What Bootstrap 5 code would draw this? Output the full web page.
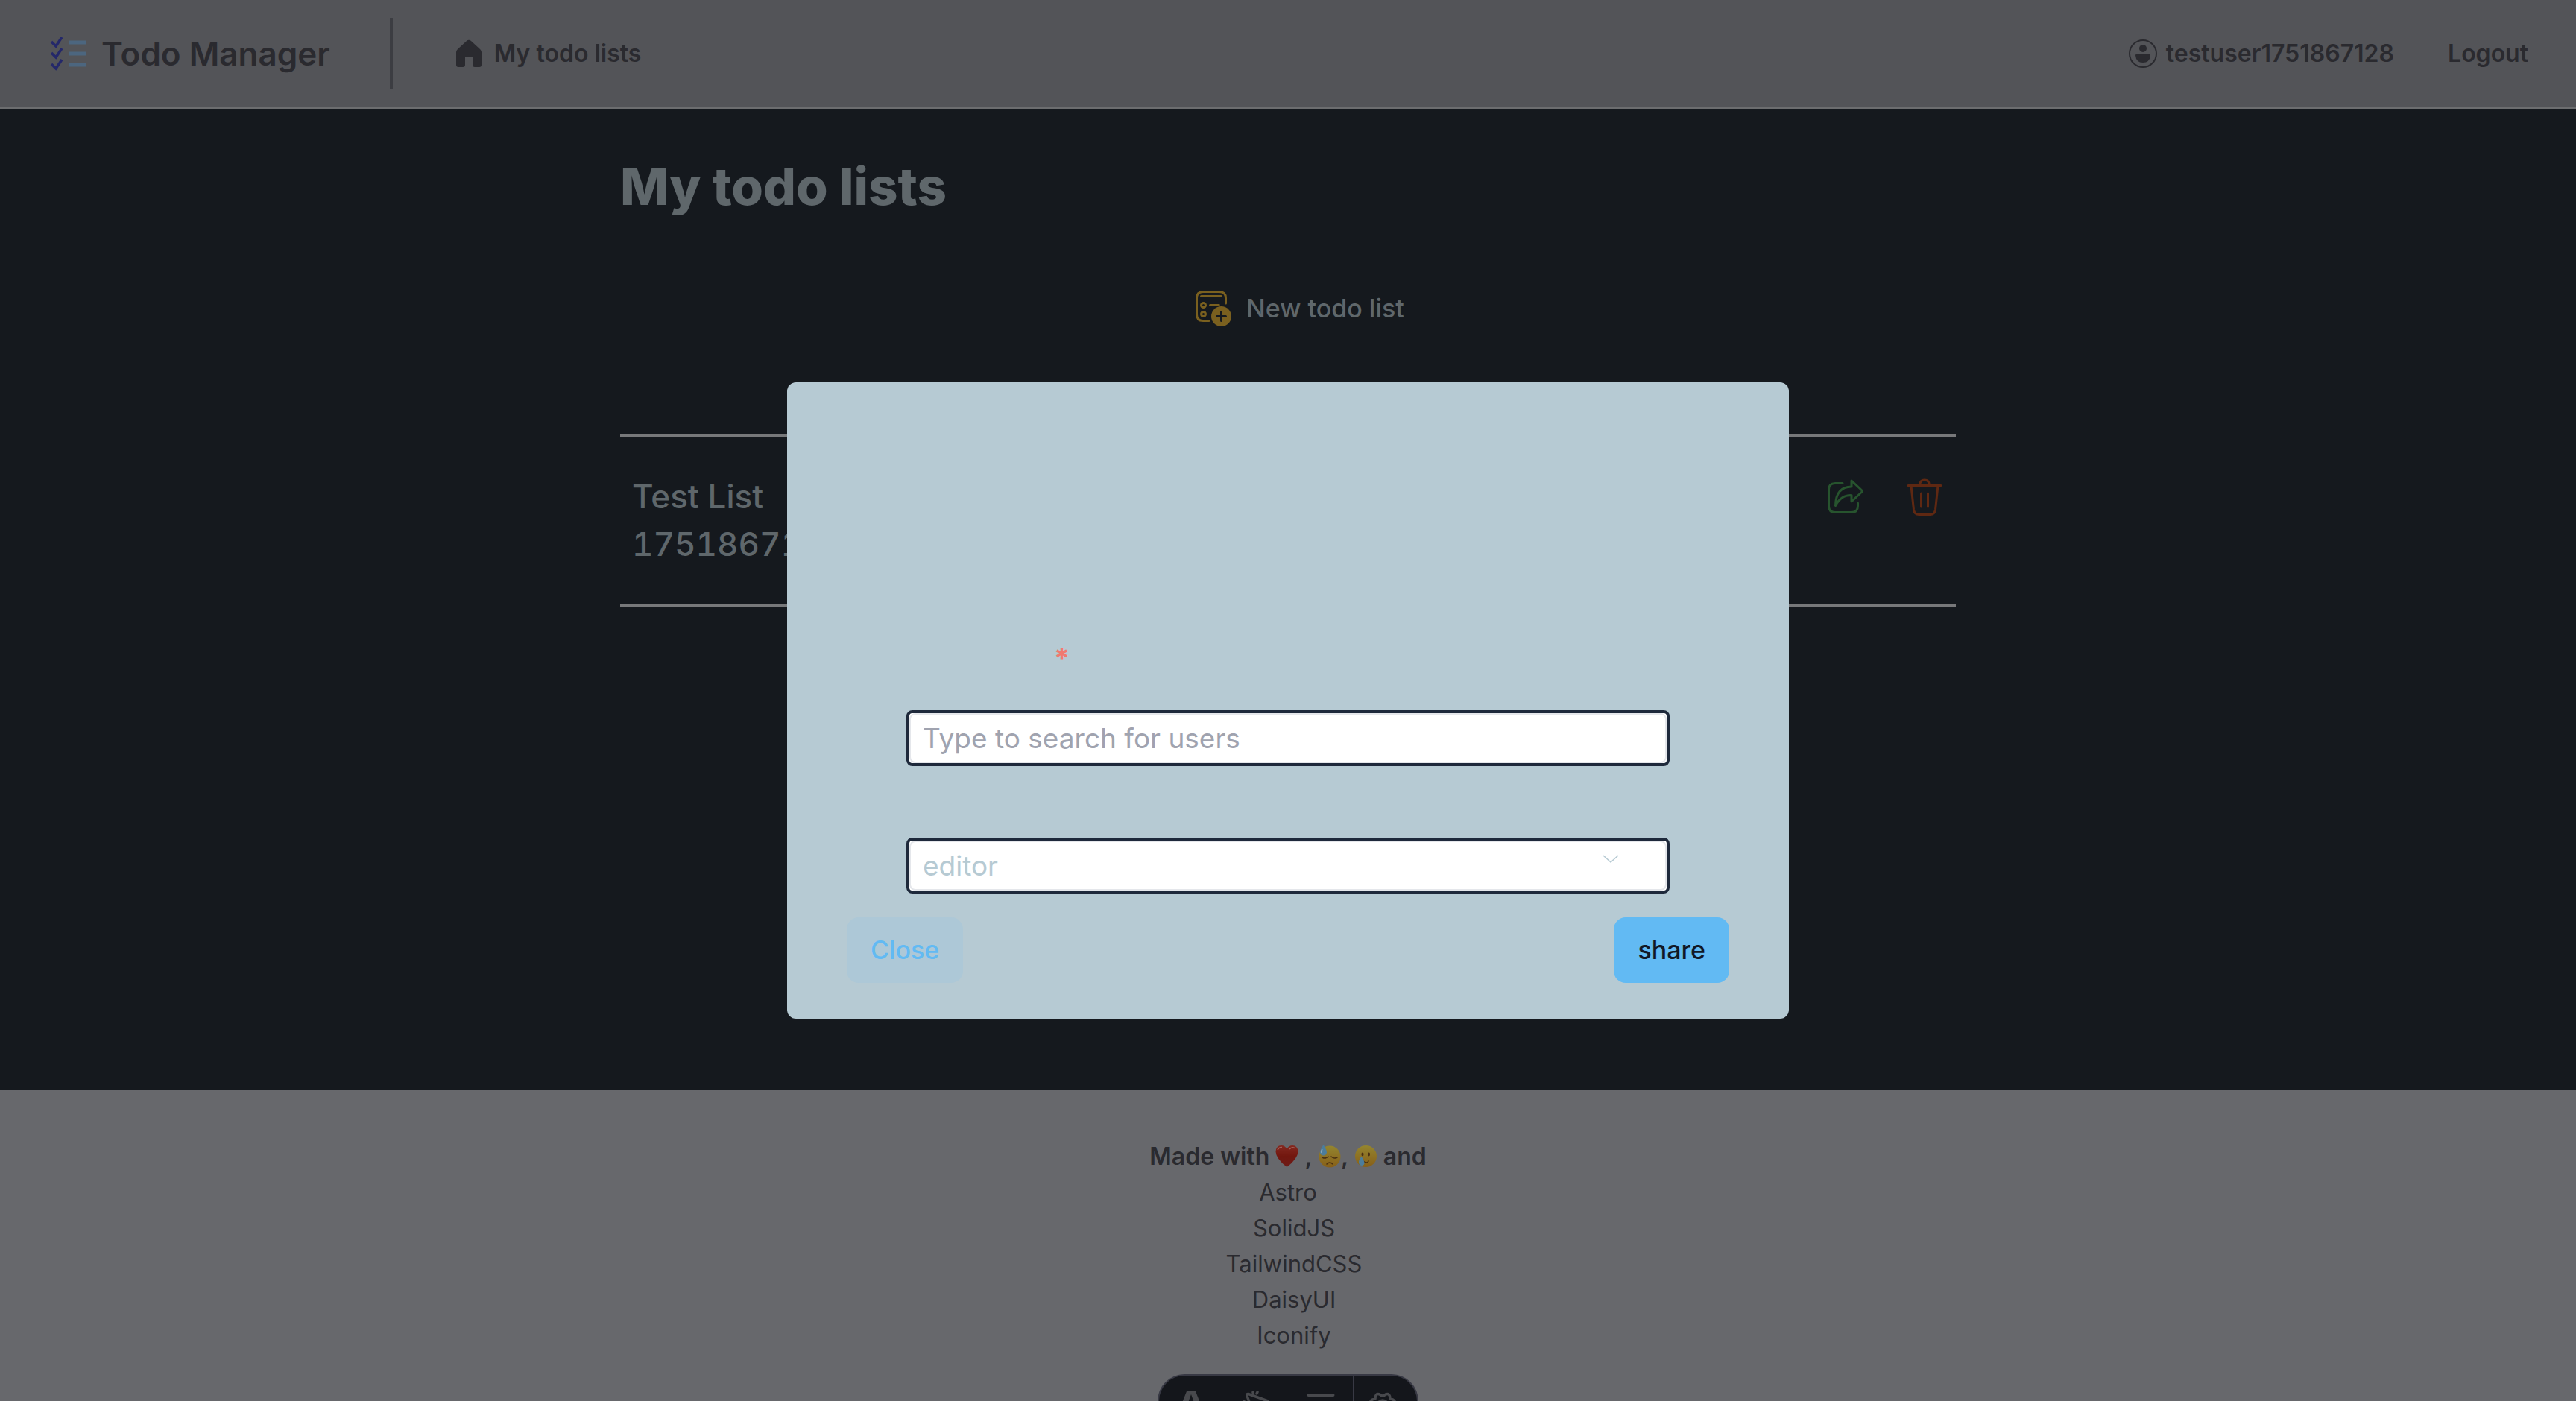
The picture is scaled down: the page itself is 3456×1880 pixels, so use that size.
<!DOCTYPE html>
<html lang="en">
<head>
<meta charset="utf-8">
<meta name="viewport" content="width=device-width, initial-scale=1">
<title>Todo Manager</title>
<link href="https://cdn.jsdelivr.net/npm/bootstrap@5.3.0/dist/css/bootstrap.min.css" rel="stylesheet">
<style>
  body { font-family: Inter, "Liberation Sans", sans-serif; font-size: 32px; line-height: 48px; background: #15191e; color: #5f676b; }
  a { color: inherit; text-decoration: none; }
  svg { display: block; flex: none; }
  .topbar { background: #535458; color: #2a2a2f; border-bottom: 2px solid #6c6d6f; padding: 24px 64px; font-weight: 600; }
  .brand { font-size: 44px; line-height: 64px; gap: 20px; }
  .brand-rule { width: 4px; height: 96px; background: #3c3d42; margin: 0 84px 0 80px; }
  .account { gap: 12px; margin-right: 72px; }
  .page-col { width: 100%; max-width: 1792px; padding: 64px 0; }
  .page-title { font-size: 69px; line-height: 80px; font-weight: 800; margin: 0 0 100px; }
  .new-list { font-size: 34px; font-weight: 500; gap: 20px; color: inherit; margin-left: 32px; }
  .list-row { border-top: 4px solid #77787a; border-bottom: 4px solid #77787a; padding: 48px 16px; margin-top: 144px; }
  .list-name { font-size: 44px; line-height: 64px; font-weight: 500; max-width: 400px; margin: 0; font-variant-numeric: tabular-nums; }
  .list-tools { gap: 56px; padding-top: 8px; }
  .icon-btn { border: 0; background: none; padding: 0; }
  .site-foot { background: #67686c; color: #2a2a2f; padding: 66px 0 64px; }
  .made-with { font-weight: 600; font-size: 32px; }
  .made-with svg { display: inline-block; vertical-align: -4px; }
  .stack-list { font-size: 31px; }
  .toolbar-dev { width: 350px; height: 36px; background: #14161b; border: 2px solid #383944; border-bottom: 0; border-radius: 40px 40px 0 0; z-index: 1030; overflow: hidden; }
  .tool { flex: 1 1 0; display: flex; justify-content: center; padding-top: 20px; }
  .tool-last { flex: 0 0 86px; border-left: 2px solid #383944; padding-right: 8px; }
  .share-box { max-width: 1344px; width: 100%; min-height: 100%; margin: 0 auto; }
  .share-body { background: #b6cad3; border: 0; border-radius: 12px; padding: 348px 80px 48px; }
  .share-fields { padding: 0 80px; }
  .req { color: #f07a70; font-size: 38px; line-height: 44px; padding-left: 198px; margin-bottom: 48px; font-weight: 700; }
  .ring { border: 4px solid #1e293b; border-radius: 8px; background: #fff; }
  .ring + .ring { margin-top: 96px; }
  .ring .form-control, .ring .form-select { border: 2px solid #e5e7eb; border-radius: 8px; padding: 0 16px; height: 67px; font-size: 37px; line-height: 56px; color: #b6cad3; background-color: #fff; box-shadow: none; }
  .ring .form-control::placeholder { color: #a0a3af; opacity: 1; }
  .ring .form-select { background-image: url("data:image/svg+xml,%3Csvg xmlns='http://www.w3.org/2000/svg' viewBox='0 0 22 12'%3E%3Cpath d='M1 1l10 9 10-9' fill='none' stroke='%23b6cad3' stroke-width='1.6'/%3E%3C/svg%3E"); background-size: 22px 12px; background-position: right 62px top 17px; }
  .share-actions { margin-top: 32px; }
  .act { font-size: 34px; line-height: 48px; font-weight: 500; padding: 20px 32px; border: 0; border-radius: 16px; }
  .act-close, .act-close:hover { background: #adc8d7; color: #62baf3; }
  .act-share, .act-share:hover { background: #62baf3; color: #111827; }
</style>
<script src="https://cdn.jsdelivr.net/npm/bootstrap@5.3.0/dist/js/bootstrap.bundle.min.js"></script>
</head>
<body class="d-flex flex-column min-vh-100">
<header class="topbar d-flex align-items-center">
  <a href="#" class="brand d-flex align-items-center">
    <svg width="52" height="48" viewBox="0 0 52 48" fill="none"><g stroke="#24286a" stroke-width="3.500"><path d="M5 8l6 6 8-12M5 23l6 6 8-12M5 38l6 6 8-12"/></g><path d="M28 9h24M28 24h24M28 39h24" stroke="#4c667f" stroke-width="5"/></svg>
    <span>Todo Manager</span>
  </a>
  <div class="brand-rule"></div>
  <nav class="d-flex align-items-center flex-grow-1">
    <a href="#" class="d-flex align-items-center gap-3">
      <svg width="36" height="38" viewBox="0 0 36 38"><path d="M15 2q3-2.600 6 0L33 13q2 2 2 4v17q0 3-3 3h-6q-3 0-3-3V23H13v11q0 3-3 3H4q-3 0-3-3V17q0-2 2-4z" fill="#2a2a2f"/></svg>
      <span>My todo lists</span>
    </a>
    <a href="#" class="account ms-auto d-flex align-items-center">
      <svg width="38" height="38" viewBox="0 0 38 38"><circle cx="19" cy="19" r="18" fill="none" stroke="#2a2a2f" stroke-width="2"/><circle cx="19" cy="12" r="5" fill="#2a2a2f"/><path d="M11 19h16q2 0 2 2.500Q28 31 19 31T9 21.500Q9 19 11 19z" fill="#2a2a2f"/></svg>
      <span>testuser1751867128</span>
    </a>
    <a href="#">Logout</a>
  </nav>
</header>
<main class="flex-grow-1">
  <div class="page-col mx-auto">
    <h1 class="page-title">My todo lists</h1>
    <div class="d-flex justify-content-center">
      <button type="button" class="icon-btn new-list d-flex align-items-center">
        <svg width="48" height="48" viewBox="0 0 48 48" fill="none" stroke="#7a601f" stroke-width="3" stroke-linecap="round"><path d="M40.500 17V10q0-8.500-8.500-8.500H10Q1.500 1.500 1.500 10v22q0 8.500 8.500 8.500h8M7.500 7.500h27M19.500 19.500h12"/><circle cx="10.500" cy="19.500" r="3"/><circle cx="10.500" cy="31.500" r="3"/><circle cx="34.500" cy="34.500" r="15" fill="#15191e" stroke="none"/><circle cx="34.500" cy="34.500" r="13.500" fill="#7a601f" stroke="none"/><path d="M34.500 28.500v12M28.500 34.500h12" stroke="#15191e"/></svg>
        <span>New todo list</span>
      </button>
    </div>
    <div class="list-row d-flex align-items-start justify-content-between">
      <h2 class="list-name">Test List 1751867128</h2>
      <div class="list-tools d-flex">
        <button type="button" class="icon-btn" aria-label="Share list">
          <svg width="48" height="50" viewBox="0 0 48 50" fill="none" stroke="#27542e" stroke-width="3" stroke-linecap="round" stroke-linejoin="round"><path d="M20 6.500H10Q1.500 6.500 1.500 15v22q0 8.500 8.500 8.500h22q8.500 0 8.500-8.500v-4"/><path d="M32 3l15 14-15 14v-8.500Q18 22 10.500 36.500 11 11 32 11z"/></svg>
        </button>
        <button type="button" class="icon-btn" aria-label="Delete list">
          <svg width="52" height="50" viewBox="0 0 52 50" fill="none" stroke="#5f2812" stroke-width="3" stroke-linecap="round" stroke-linejoin="round"><path d="M4 9.500h44M8 10l3.500 32q1 6.500 7 6.500h15q6 0 7-6.500L44 10M19.500 9Q20 2 26 2t6.500 7M21.500 20v18M30.500 20v18"/></svg>
        </button>
      </div>
    </div>
  </div>
</main>
<footer class="site-foot text-center">
  <div class="made-with">Made with
    <svg width="31" height="31" viewBox="0 0 31 31" role="img" aria-label="heart"><defs><linearGradient id="hg" x2="0" y2="1"><stop offset="0" stop-color="#84281f"/><stop offset=".5" stop-color="#72170f"/><stop offset="1" stop-color="#6d1c18"/></linearGradient><linearGradient id="fg" x2="0" y2="1"><stop offset="0" stop-color="#94852f"/><stop offset="1" stop-color="#875f18"/></linearGradient></defs><path d="M15.500 30Q1 19 .5 9.500 1 1 8 1q5 0 7.500 5Q18 1 23 1q7 0 7.500 8.500Q30 19 15.500 30z" fill="url(#hg)"/><path d="M3 7q2-4 6-3.500M19 6q3-3.500 7-1.500" stroke="#a0605a" stroke-width="1.500" fill="none"/></svg>
    ,
    <svg width="31" height="31" viewBox="0 0 31 31" role="img" aria-label="downcast face with sweat"><circle cx="16" cy="16" r="14.500" fill="url(#fg)"/><path d="M6 17q4 2.500 8-1M18 16q4 3.500 8 1M12 26q4-4 8 0" fill="none" stroke="#4a3012" stroke-width="1.500" stroke-linecap="round"/><path d="M7.500 0Q3 7 3 10.500 3.500 14.500 7.500 14.500T12 10.500Q12 7 7.500 0z" fill="#4c7d9c"/><path d="M6 6q-2 3-1 5" stroke="#8aa6b6" stroke-width="1.500" fill="none"/></svg>,
    <svg width="31" height="31" viewBox="0 0 31 31" role="img" aria-label="smiling face with tear"><circle cx="15.500" cy="15.500" r="14.500" fill="url(#fg)"/><ellipse cx="11" cy="13" rx="1.500" ry="2.400" fill="#4a3012"/><ellipse cx="19.500" cy="13" rx="1.500" ry="2.400" fill="#4a3012"/><path d="M12 22q5 4 7 0" fill="none" stroke="#4a3012" stroke-width="1.500" stroke-linecap="round"/><path d="M9.500 16Q5.500 21 6 24q.5 4 4 4t3.500-4Q13 20 9.500 16z" fill="#4c7d9c"/></svg>
    and</div>
  <ul class="stack-list list-unstyled mb-0">
    <li><a href="#">Astro</a></li>
    <li class="ps-3"><a href="#">SolidJS</a></li>
    <li class="ps-3"><a href="#">TailwindCSS</a></li>
    <li class="ps-3"><a href="#">DaisyUI</a></li>
    <li class="ps-3"><a href="#">Iconify</a></li>
  </ul>
</footer>
<div class="toolbar-dev fixed-bottom mx-auto d-flex">
  <div class="tool"><svg width="28" height="16" viewBox="0 0 28 16"><path d="M8 1Q8.500 0 10 0h8q1.500 0 2 1l6 15H18l-4-11-4 11H2z" fill="#48494d"/></svg></div>
  <div class="tool"><svg width="36" height="16" viewBox="0 0 36 16" fill="none" stroke="#48494d" stroke-width="3.500" stroke-linecap="round"><path d="M10 18L6 7q-1-3 2-2.500L34 14M14 2v1M20 2l-1 2M1 14h1"/></svg></div>
  <div class="tool"><svg width="38" height="16" viewBox="0 0 38 16" fill="none" stroke="#48494d" stroke-width="4" stroke-linecap="round"><path d="M2.500 6h33M28 16h4"/></svg></div>
  <div class="tool tool-last"><svg width="38" height="16" viewBox="0 0 38 16" fill="none" stroke="#48494d" stroke-width="3.500" stroke-linejoin="round"><path d="M3 18q-2-6 6-7 0-8 6-6 4 4 8 0 6-2 6 6 8 1 6 7M13 16q6-6 12 0"/></svg></div>
</div>
<div class="modal d-block" tabindex="-1" role="dialog" aria-label="Share todo list">
  <div class="modal-dialog modal-dialog-centered share-box">
    <form class="modal-content share-body">
      <div class="share-fields">
        <label class="req d-block" for="users">*</label>
        <div class="ring"><input type="text" id="users" class="form-control" aria-label="Share with" placeholder="Type to search for users"></div>
        <div class="ring"><select class="form-select" aria-label="Role"><option>editor</option><option>viewer</option></select></div>
      </div>
      <div class="share-actions d-flex justify-content-between">
        <button type="button" class="btn act act-close">Close</button>
        <button type="button" class="btn act act-share">share</button>
      </div>
    </form>
  </div>
</div>
</body>
</html>
